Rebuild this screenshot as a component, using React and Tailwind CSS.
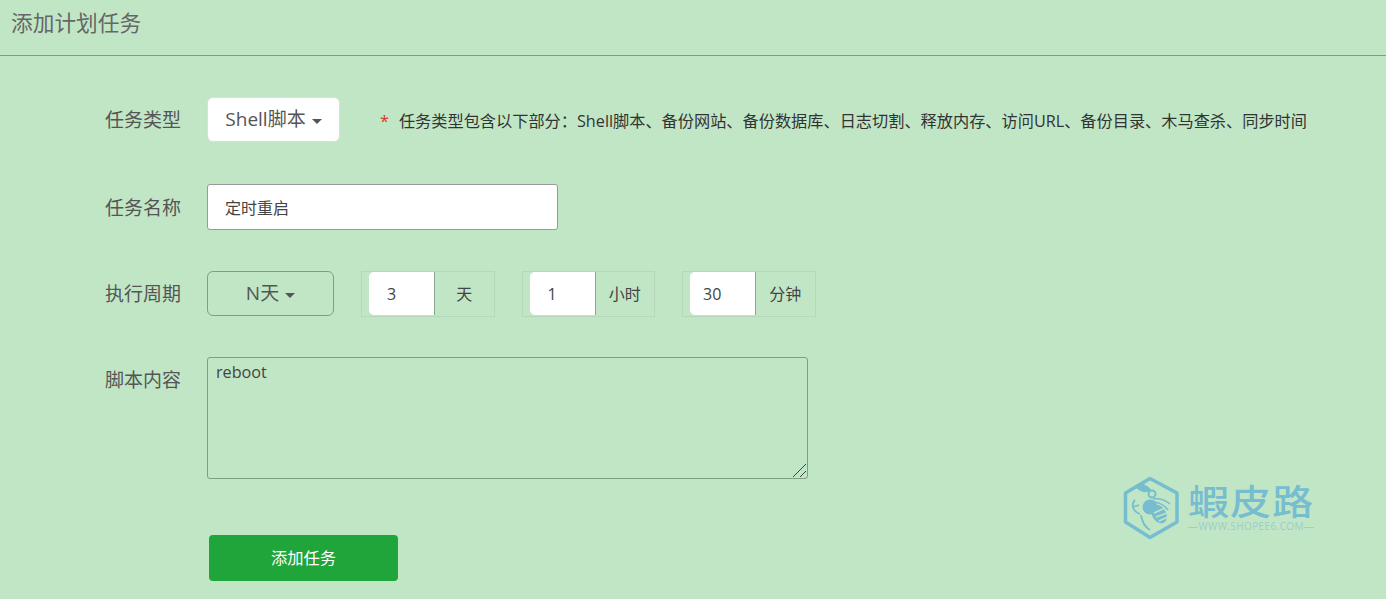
const groups = [
  { value: '3', unit: '天', pad: 'pl-[18px]' },
  { value: '1', unit: '小时', pad: 'pl-[18px]' },
  { value: '30', unit: '分钟', pad: 'pl-[13px]' },
];

function Caret() {
  return <span className="ml-[6px] inline-block h-0 w-0 border-x-[5px] border-t-[5px] border-x-transparent border-t-current align-middle" />;
}

function Logo() {
  return (
    <div className="absolute left-[1122px] top-[476px] flex items-start text-[#76bdd0]">
      <svg width="58" height="64" viewBox="0 0 58 64" fill="none" stroke="currentColor">
        <path d="M28 2.5 L55 17 V46 L28 61.5 L3.5 46 V17 Z" strokeWidth="3.5" strokeLinejoin="round" />
        <path d="M13 10 C18 6 25 9 29 14 C24 17 18 16 13 10 Z" fill="currentColor" strokeWidth="1" />
        <circle cx="30" cy="18" r="3.5" strokeWidth="2" />
        <circle cx="28" cy="31" r="7.5" fill="currentColor" stroke="none" />
        <ellipse cx="37" cy="38" rx="7" ry="10" transform="rotate(-30 37 38)" fill="currentColor" stroke="none" />
        <path d="M31 23 C37 22 43 24 48 28 M33 26 C38 27 43 30 46 34" strokeWidth="1.5" />
        <path d="M13 24 C9 28 10 35 18 38 M11 31 L17 29 M19 39 C20 46 23 51 28 54" strokeWidth="1.8" />
        <path d="M32 37 L43 32 M34 41 L45 37 M37 45 L46 41" stroke="#c1e6c6" strokeWidth="1.4" />
      </svg>
      <div className="ml-[8px] flex flex-col items-start pt-[7px]">
        <div className="h-[34px] origin-left scale-x-[1.17] font-['Noto_Sans_CJK_TC',sans-serif] text-[35px] leading-[34px] font-medium tracking-[1px] whitespace-nowrap">蝦皮路</div>
        <div className="mt-[3px] text-[10px] leading-[12px] tracking-[0.4px] whitespace-nowrap text-[#9ccdc8]">—WWW.SHOPEE6.COM—</div>
      </div>
    </div>
  );
}

export default function App() {
  return (
    <div className="relative h-[599px] overflow-hidden bg-[#c1e6c6] font-['Open_Sans','Noto_Sans_CJK_SC',sans-serif] text-[#444]">
      <div className="h-[56px] border-b border-[#7d9f84] pl-[11px] pt-[7px] text-[21.7px] leading-[32px] text-[#666]">添加计划任务</div>

      <div className="flex flex-col pl-[105px] pt-[41px]">
        <div className="flex h-[45px] items-center">
          <label className="w-[102px] pt-[2px] text-[19px] text-[#555]">任务类型</label>
          <button className="h-[45px] w-[133px] rounded-[6px] border border-[#ddd] bg-white text-[19px] text-[#555]">
            Shell脚本<Caret />
          </button>
          <span className="ml-[40px] pt-[4px] text-[16.2px] whitespace-nowrap text-[#333]">
            <span className="mr-[10px] text-[#e0341f]">*</span>
            任务类型包含以下部分：Shell脚本、备份网站、备份数据库、日志切割、释放内存、访问URL、备份目录、木马查杀、同步时间
          </span>
        </div>

        <div className="mt-[42px] flex h-[46px] items-center">
          <label className="w-[102px] pt-[2px] text-[19px] text-[#555]">任务名称</label>
          <input readOnly value="定时重启" className="h-[46px] w-[351px] rounded-[3px] border border-[#999] bg-white px-[17px] text-[16px] text-[#444] outline-none" />
        </div>

        <div className="mt-[41px] flex h-[46px] items-start">
          <label className="w-[102px] pt-[9px] text-[19px] text-[#555]">执行周期</label>
          <button className="h-[45px] w-[127px] rounded-[6px] border border-[#7d9f84] text-[19px] text-[#555]">
            N天<Caret />
          </button>
          <div className="ml-[27px] flex gap-[27px]">
            {groups.map((g) => (
              <div key={g.unit} className="flex h-[46px] w-[133.5px] items-stretch border border-[#b5d7ba] pb-[1px] pl-[7px]">
                <input readOnly value={g.value} className={`w-[66px] rounded-l-[5px] border-r border-[#8aa890] bg-white text-[16px] text-[#444] outline-none ${g.pad}`} />
                <span className="flex flex-1 items-center justify-center text-[16px] text-[#444]">{g.unit}</span>
              </div>
            ))}
          </div>
        </div>

        <div className="mt-[40px] flex">
          <label className="w-[102px] pt-[9px] text-[19px] text-[#555]">脚本内容</label>
          <div className="relative h-[122px] w-[601px]">
            <textarea readOnly value="reboot" className="block h-full w-full resize-none rounded-[3px] border border-[#7d9f84] bg-transparent px-[8px] py-[2px] text-[16.2px] text-[#444] outline-none" />
            <svg className="absolute right-[1px] bottom-[1px]" width="15" height="15" viewBox="0 0 15 15" fill="none" stroke="#444">
              <path d="M1 14 L14 1 M8 14 L14 8" />
            </svg>
          </div>
        </div>

        <button className="ml-[104px] mt-[56px] h-[46px] w-[189px] rounded-[4px] bg-[#20a53a] text-[16.3px] text-white">添加任务</button>
      </div>

      <Logo />
    </div>
  );
}
